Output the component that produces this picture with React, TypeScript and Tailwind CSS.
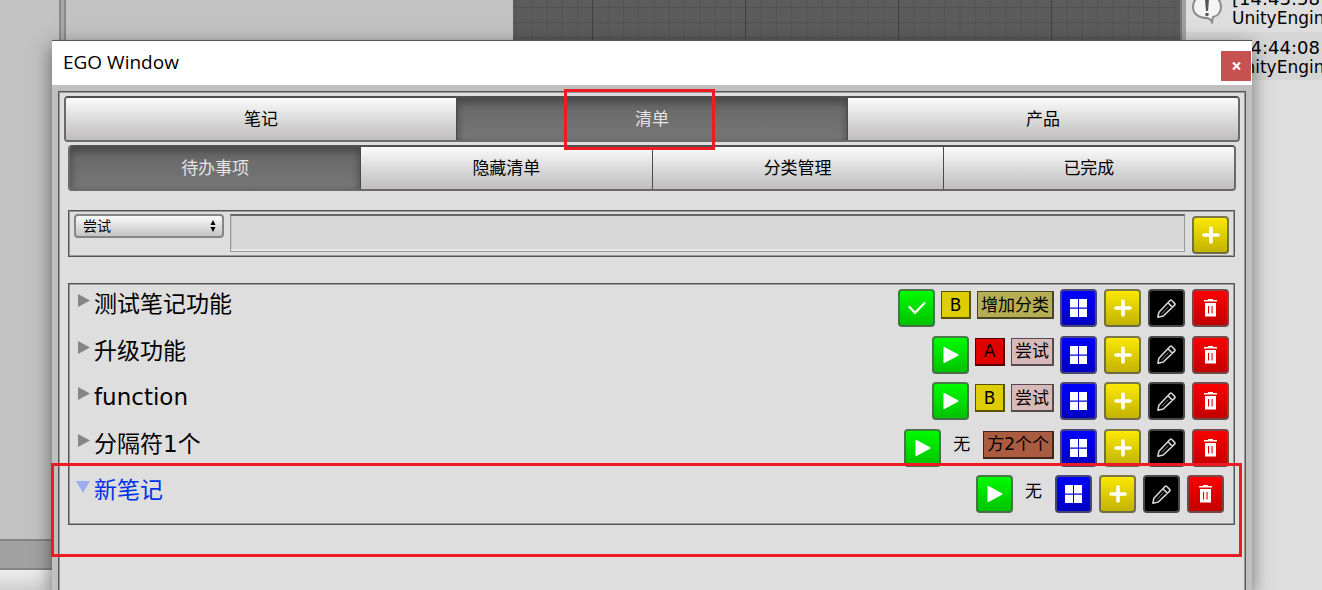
import { ReactNode, useState } from "react";
import clsx from "clsx";

interface ITodo {
  id: number;
  title: string;
  level: string;
  category?: string;
  categoryColor?: string;
  started?: boolean;
  selected?: boolean;
}

const mainTabs = ["笔记", "清单", "产品"];
const subTabs = ["待办事项", "隐藏清单", "分类管理", "已完成"];
const categories = ["尝试", "增加分类", "方2个个"];

const todos: ITodo[] = [
  { id: 1, title: "测试笔记功能", level: "B", category: "增加分类", categoryColor: "bg-[#b5ae54] border-[#48451f]", started: true },
  { id: 2, title: "升级功能", level: "A", category: "尝试", categoryColor: "bg-[#d8b9b9] border-[#564a4a]" },
  { id: 3, title: "function", level: "B", category: "尝试", categoryColor: "bg-[#d8b9b9] border-[#564a4a]" },
  { id: 4, title: "分隔符1个", level: "无", category: "方2个个", categoryColor: "bg-[#ab5b40] border-[#44241a]" },
  { id: 5, title: "新笔记", level: "无", selected: true },
];

const levelColors: Record<string, string> = {
  A: "border-[#580000] bg-[#df0000]",
  B: "border-[#585100] bg-[#dfcd04]",
  无: "border-transparent",
};

const buttonColors = {
  green: "from-[#00ff00] to-[#00bf00]",
  blue: "from-[#0000ff] to-[#0000bf]",
  yellow: "from-[#ffeb04] to-[#bfb003]",
  black: "from-black to-black",
  red: "from-[#ff0000] to-[#bf0000]",
};

const PlusIcon = () => (
  <svg width="18" height="18" viewBox="0 0 18 18" stroke="white" strokeWidth="3.6" strokeLinecap="round">
    <path d="M9 2v14M2 9h14" />
  </svg>
);

const PlayIcon = () => (
  <svg width="17" height="18" viewBox="0 0 17 18" fill="white">
    <path d="M1.5 1.6Q1.5 .6 2.5 1L16 8.2Q17 9 16 9.8L2.5 17Q1.5 17.4 1.5 16.4z" />
  </svg>
);

const CheckIcon = () => (
  <svg width="18" height="18" viewBox="0 0 18 18" fill="none" stroke="white" strokeWidth="2.2" strokeLinecap="round">
    <path d="M1.5 8l5.5 5.8L16.5 4" />
  </svg>
);

const GridIcon = () => (
  <svg width="17" height="18" viewBox="0 0 17 18" fill="white">
    <path d="M0 0h8v8.5H0zM9 0h8v8.5H9zM0 9.8h8V18H0zM9 9.8h8V18H9z" />
  </svg>
);

const PencilIcon = () => (
  <svg width="19" height="19" viewBox="0 0 19 19" fill="none" stroke="#d4d4d4" strokeWidth="1.6" strokeLinejoin="round">
    <path d="M.9 18.2l1-5L13 1.5q.9-.9 1.8 0l2.8 2.9q.8.9 0 1.8L6.3 17zM11 3.8l4.5 4.6" />
    <path d="M11.4 7.6l-6.6 7" stroke="#777" strokeWidth="1" />
  </svg>
);

const TrashIcon = () => (
  <svg width="13" height="18" viewBox="0 0 13 18" fill="white">
    <path d="M4 0h5v1h4v1.6H0V1h4z" />
    <path fillRule="evenodd" d="M1 4h11v13.4H1zM4 7v7.4h1.1V7zM7.5 7v7.4h1.1V7z" />
  </svg>
);

interface IIconButton {
  color: keyof typeof buttonColors;
  label: string;
  children: ReactNode;
}

const IconButton = ({ color, label, children }: IIconButton) => (
  <button
    aria-label={label}
    className={clsx(
      "flex h-[38px] w-[37px] shrink-0 items-center justify-center rounded-[4px] border-2 border-[#5a5a5a]/80 bg-linear-to-b bg-origin-border",
      buttonColors[color]
    )}
  >
    {children}
  </button>
);

interface IToolbar {
  items: string[];
  active: string;
  onSelect: (item: string) => void;
}

const Toolbar = ({ items, active, onSelect }: IToolbar) => (
  <div className="flex h-[46px] overflow-hidden rounded-[4px] border-2 border-t-[#4f4f4f] border-[#6a6a6a]">
    {items.map((item) => (
      <button
        key={item}
        onClick={() => onSelect(item)}
        className={clsx(
          "flex-1 border-l border-[#4a4a4a] pt-0.5 text-[17px] first:border-l-0",
          item === active
            ? "bg-linear-to-b from-[#666] to-[#777] text-[#e4e4e4] shadow-[inset_0_4px_8px_#444]"
            : "bg-linear-to-b from-[#fbfbfb] to-[#bfbdbe] text-black"
        )}
      >
        {item}
      </button>
    ))}
  </div>
);

const TodoRow = ({ todo }: { todo: ITodo }) => (
  <li className={clsx("flex items-start", todo.selected && "pr-[5px]")}>
    <button
      aria-expanded={!!todo.selected}
      className={clsx("flex min-w-0 flex-1 items-start gap-1 text-left text-[23px] leading-[30px]", todo.selected && "text-[#0033e6]")}
    >
      <svg className="mt-1 shrink-0" width="14" height="16" viewBox="0 0 14 16">
        {todo.selected ? <path d="M0 2h14L7 14z" fill="#9dacec" /> : <path d="M2 1v13l12-6.5z" fill="#868686" />}
      </svg>
      <span className="truncate">{todo.title}</span>
    </button>
    <div className="flex items-start gap-1.5">
      <IconButton color="green" label={todo.started ? "完成" : "开始"}>
        {todo.started ? <CheckIcon /> : <PlayIcon />}
      </IconButton>
      <span
        className={clsx(
          "mt-0.5 flex h-7 w-[30px] items-center justify-center border border-r-2 border-b-2 pt-0.5 text-[17px]",
          levelColors[todo.level]
        )}
      >
        {todo.level}
      </span>
      {todo.category && (
        <span
          className={clsx(
            "mt-0.5 flex h-7 items-center border border-r-2 border-b-2 px-[3px] pt-0.5 text-[17px] whitespace-nowrap",
            todo.categoryColor
          )}
        >
          {todo.category}
        </span>
      )}
      <div className="flex gap-[7px]">
        <IconButton color="blue" label="分类"><GridIcon /></IconButton>
        <IconButton color="yellow" label="添加"><PlusIcon /></IconButton>
        <IconButton color="black" label="编辑"><PencilIcon /></IconButton>
        <IconButton color="red" label="删除"><TrashIcon /></IconButton>
      </div>
    </div>
  </li>
);

// the editor panels that show behind the floating window
const EditorBackground = () => (
  <div className="flex h-full">
    <div className="flex w-[59px] flex-col bg-[#c2c2c2]">
      <div className="flex-1" />
      <div className="h-[31px] border-y-2 border-[#858585] bg-[#a2a2a2]" />
      <div className="h-5 bg-linear-to-b from-[#eee] to-[#d0d0d0]" />
    </div>
    <div className="w-[7px] border-x-2 border-[#8a8a8a] bg-[#a8a8a8]" />
    <div className="w-[447px] bg-[#c2c2c2]" />
    <svg className="h-full min-w-0 flex-1 bg-[#5c5c5c]">
      <defs>
        <pattern id="minor" width="15.3" height="15.3" x="2.8" y="7" patternUnits="userSpaceOnUse">
          <path d="M0 .5h15.3M.5 0v15.3" stroke="#525252" />
        </pattern>
        <pattern id="major" width="153" height="153" x="79" y="120" patternUnits="userSpaceOnUse">
          <path d="M.5 0v153" stroke="#424242" />
        </pattern>
      </defs>
      <rect width="100%" height="100%" fill="url(#minor)" />
      <rect width="100%" height="100%" fill="url(#major)" />
    </svg>
    <div className="w-1.5 border-l-2 border-[#777] bg-[#a0a0a0]" />
    <div className="w-[136px] overflow-hidden bg-[#dedede] text-[17px] leading-[19px]">
      <div className="flex h-8 items-end gap-2.5 pl-1.5">
        <svg className="mb-2 shrink-0" width="30" height="32" viewBox="0 0 30 32">
          <path d="M15 1C7 1 1 8 1 15s6 11 14 11q4 1 5 4l1-5C26 24 29 20 29 15 29 8 23 1 15 1z" fill="#f4f4f4" stroke="#8a8a8a" strokeWidth="2" />
          <path d="M12.8 5h4.4l-1.2 14h-2z" fill="#555" />
          <circle cx="15" cy="22.5" r="1.8" fill="#555" />
        </svg>
        <div className="pb-1"><span className="text-lg/[19px]">[14:43:58</span><br />UnityEngin</div>
      </div>
      <div className="flex h-12 gap-2.5 bg-[#d6d6d6] pl-1.5">
        <svg className="mt-2 shrink-0" width="30" height="30" viewBox="0 0 30 30">
          <path d="M10 0h10l8 8v12l-8 8H10l-8-8V8z" fill="#b64a4a" />
        </svg>
        <div className="pt-1.5"><span className="text-lg/[19px]">[14:44:08</span><br />UnityEngin</div>
      </div>
    </div>
  </div>
);

const App = () => {
  const [mainTab, setMainTab] = useState("清单");
  const [subTab, setSubTab] = useState("待办事项");
  const [category, setCategory] = useState("尝试");
  const [text, setText] = useState("");

  return (
    <div className="relative h-screen overflow-hidden font-['DejaVu_Sans','Noto_Sans_CJK_SC',sans-serif] text-black">
      <EditorBackground />

      <div className="absolute top-10 right-[70px] bottom-0 left-[52px] flex flex-col border-t border-[#555] bg-[#c0c0c0] shadow-[0_6px_18px_rgba(0,0,0,0.5)]">
        <header className="flex h-11 shrink-0 items-center justify-between bg-white pr-px pl-[11px]">
          <h1 className="pb-0.5 font-['Open_Sans','Noto_Sans',sans-serif] text-[19px]">EGO Window</h1>
          <button aria-label="关闭" className="mt-1.5 flex size-[30px] items-center justify-center bg-[#c75050]">
            <svg width="9" height="8" viewBox="0 0 9 8" stroke="white" strokeWidth="2.2">
              <path d="M1 .5l7 7M8 .5l-7 7" />
            </svg>
          </button>
        </header>

        <main className="mx-1.5 mt-1.5 -mb-1 flex-1 border border-[#555] bg-[#dedede] px-[5px] pt-1 shadow-[inset_0_0_0_1px_#999]">
          <Toolbar items={mainTabs} active={mainTab} onSelect={setMainTab} />
          <div className="mx-1 mt-[3px]">
            <Toolbar items={subTabs} active={subTab} onSelect={setSubTab} />

            <form
              onSubmit={(e) => e.preventDefault()}
              className="mt-[19px] mr-px flex h-[47px] items-start border border-[#555] px-[5px] pt-[3px] shadow-[inset_0_0_0_1px_#999]"
            >
              <div className="relative">
                <select
                  aria-label="分类"
                  value={category}
                  onChange={(e) => setCategory(e.target.value)}
                  className="block h-6 w-[150px] appearance-none rounded-[4px] border-2 border-[#858585] bg-linear-to-b from-[#fafafa] to-[#c4c4c4] pl-[7px] text-[14px] leading-5"
                >
                  {categories.map((c) => (
                    <option key={c}>{c}</option>
                  ))}
                </select>
                <svg className="pointer-events-none absolute top-1.5 right-2" width="6" height="12" viewBox="0 0 6 12">
                  <path d="M3 0l2.5 5h-5zM3 12L.5 7h5z" />
                </svg>
              </div>
              <input
                aria-label="待办事项"
                value={text}
                onChange={(e) => setText(e.target.value)}
                className="ml-1.5 h-[38px] min-w-0 flex-1 border border-t-2 border-[#999] border-t-[#666] bg-[#d8d8d8] px-2 text-[17px] shadow-[inset_0_-2px_0_#e6e6e6,inset_1px_0_0_#c4c4c4] outline-none"
              />
              <div className="mt-0.5 ml-[7px]">
                <IconButton color="yellow" label="添加"><PlusIcon /></IconButton>
              </div>
            </form>

            <ul className="mt-[26px] mr-px flex min-h-[242px] flex-col justify-between border border-[#555] pt-[5px] pr-[5px] pb-[11px] pl-[7px] shadow-[inset_0_0_0_1px_#999]">
              {todos.map((todo) => (
                <TodoRow key={todo.id} todo={todo} />
              ))}
            </ul>
          </div>
        </main>
      </div>

      {/* highlight marks */}
      <div className="pointer-events-none absolute top-[89px] left-[564px] h-[61px] w-[151px] border-3 border-[#ed1c24]" />
      <div className="pointer-events-none absolute top-[463px] right-20 left-[51px] h-[94px] border-3 border-[#ed1c24]" />
    </div>
  );
};

export default App;
